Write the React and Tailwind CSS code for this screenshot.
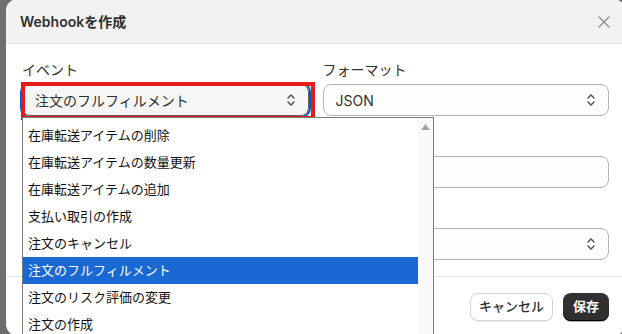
import React from "react";

const font = { fontFamily: 'Inter, "Noto Sans CJK JP", sans-serif' };

function SelectIcon() {
  return (
    <svg width="10" height="14" viewBox="0 0 10 14" fill="none" stroke="#4a4a4a" strokeWidth="1.4" strokeLinecap="round" strokeLinejoin="round">
      <path d="M2 5 L5 2 L8 5" />
      <path d="M2 9 L5 12 L8 9" />
    </svg>
  );
}

const items = [
  "在庫転送アイテムの削除",
  "在庫転送アイテムの数量更新",
  "在庫転送アイテムの追加",
  "支払い取引の作成",
  "注文のキャンセル",
  "注文のフルフィルメント",
  "注文のリスク評価の変更",
  "注文の作成",
];

export default function App() {
  return (
    <div className="relative w-[622px] h-[334px] overflow-hidden bg-[#6f6f6f]" style={font}>
      <div className="ml-[6px] w-[619px] h-[337px] -mt-px bg-white rounded-[12px] overflow-hidden flex flex-col">
        <div className="h-[45px] shrink-0 bg-[#f2f2f2] border-b border-[#e3e3e3] flex items-center justify-between pl-[14px] pr-[15px] pt-px">
          <span className="text-[14px] font-semibold text-[#303030]">Webhookを作成</span>
          <svg width="12" height="12" viewBox="0 0 12 12" stroke="#8a8a8a" strokeWidth="1.3" strokeLinecap="round">
            <path d="M1 1 L11 11 M11 1 L1 11" />
          </svg>
        </div>
        <div className="px-[16px] pt-[16px] pb-[16px] flex flex-col gap-[16px] border-b border-[#e3e3e3]">
          <div className="grid grid-cols-2 gap-[14px]">
            <div className="flex flex-col gap-[4px]">
              <span className="h-[20px] leading-[20px] text-[14px] text-[#303030]">イベント</span>
              <div className="h-[32px] rounded-[8px] border border-[#5f5f5f] bg-[#f6f6f6] outline-2 outline-[#005bd3] flex items-center justify-between pl-[12px] pr-[12px]">
                <span className="text-[14px] text-[#303030]">注文のフルフィルメント</span>
                <SelectIcon />
              </div>
            </div>
            <div className="flex flex-col gap-[4px]">
              <span className="h-[20px] leading-[20px] text-[14px] text-[#303030]">フォーマット</span>
              <div className="h-[32px] rounded-[8px] border border-[#b5b5b5] bg-[#fdfdfd] flex items-center justify-between pl-[12px] pr-[12px]">
                <span className="text-[14px] text-[#303030]">JSON</span>
                <SelectIcon />
              </div>
            </div>
          </div>
          <div className="flex flex-col gap-[4px]">
            <div className="h-[20px]" />
            <div className="h-[32px] rounded-[8px] border border-[#b5b5b5] bg-[#fdfdfd]" />
          </div>
          <div className="flex flex-col gap-[4px]">
            <div className="h-[20px]" />
            <div className="h-[32px] rounded-[8px] border border-[#b5b5b5] bg-[#fdfdfd] flex items-center justify-end pr-[12px]">
              <SelectIcon />
            </div>
          </div>
        </div>
        <div className="flex justify-end gap-[10px] px-[16px] pt-[16px]">
          <div className="h-[28px] w-[83px] rounded-[8px] border border-[#d4d4d4] bg-white shadow-[0_1px_0_rgba(0,0,0,0.08)] flex items-center justify-center text-[13px] font-medium text-[#303030]">
            キャンセル
          </div>
          <div className="h-[28px] w-[46px] rounded-[8px] bg-[#303030] shadow-[inset_0_-1px_0_#000,0_1px_0_rgba(0,0,0,0.3)] flex items-center justify-center text-[13px] font-semibold text-white">
            保存
          </div>
        </div>
      </div>

      {/* red annotation box */}
      <div className="absolute left-[21px] top-[82px] w-[294px] h-[38px] border-[4px] border-[#e41b1b] pointer-events-none" />

      {/* native select popup */}
      <div className="absolute left-[22px] top-[117px] w-[412px] h-[230px] border border-[#7a7a7a] bg-white flex">
        <div className="flex-1 flex flex-col pt-[4px]">
          {items.map((t) => (
            <div
              key={t}
              className={
                "h-[27px] shrink-0 flex items-center pl-[5px] text-[13px] " +
                (t === "注文のフルフィルメント" ? "bg-[#1a68d4] text-white" : "text-[#111]")
              }
            >
              {t}
            </div>
          ))}
        </div>
        <div className="w-[15px] bg-[#f9f9f9] flex justify-center pt-[6px]">
          <svg width="9" height="6" viewBox="0 0 9 6">
            <path d="M4.5 0 L9 6 L0 6 Z" fill="#a3a3a3" />
          </svg>
        </div>
      </div>
    </div>
  );
}
